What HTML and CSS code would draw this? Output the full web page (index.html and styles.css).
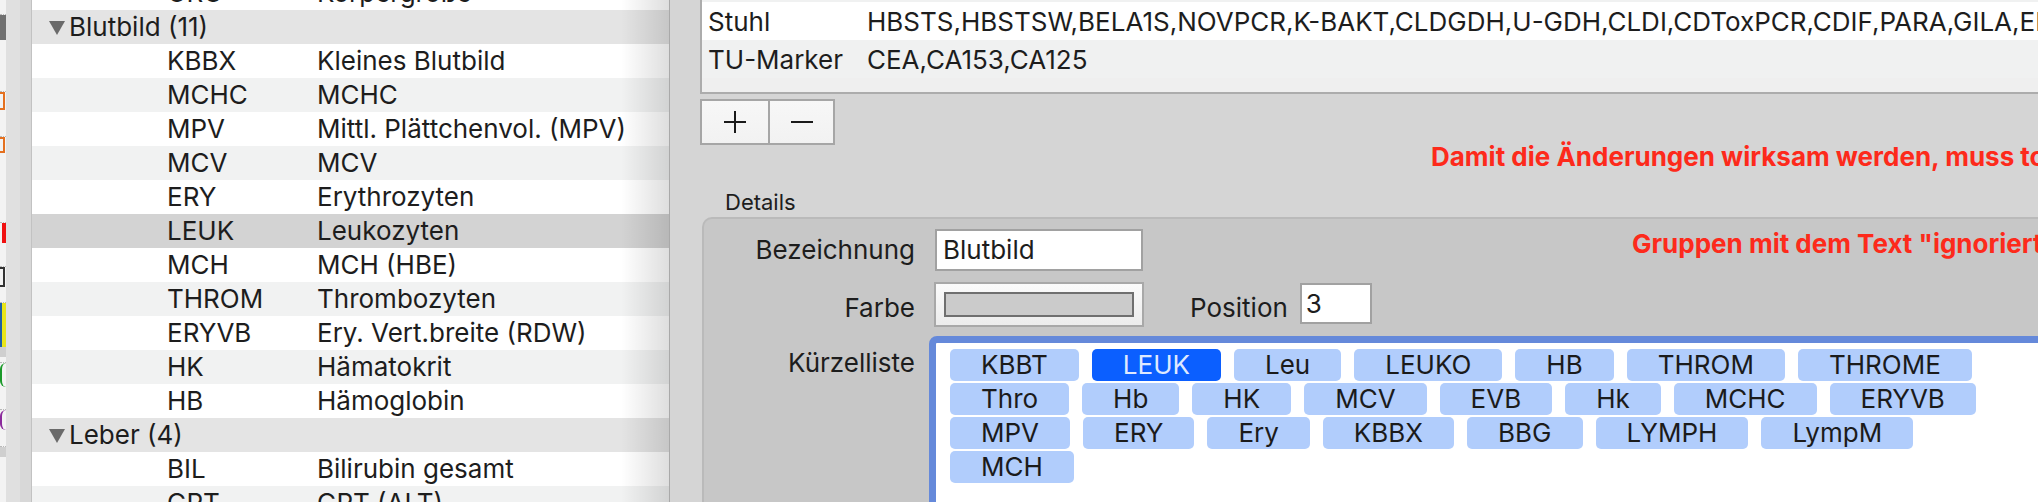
FILE: index.html
```html
<!DOCTYPE html>
<html lang="de">
<head>
  <meta charset="UTF-8" />
  <title>Laborgruppen</title>
  <link rel="stylesheet" href="styles.css">
</head>
<body>
  <div class="screen">
    <div class="edge">
      <div class="e-light" style="height:15px"></div>
      <div class="e-dark" style="height:25px"></div>
      <div class="e-light" style="height:52px"></div>
      <div class="e-mark orange" style="height:18px"></div>
      <div class="e-light" style="height:27px"></div>
      <div class="e-mark orange" style="height:16px"></div>
      <div class="e-light" style="height:70px"></div>
      <div class="e-fill red" style="height:20px"></div>
      <div class="e-light" style="height:24px"></div>
      <div class="e-mark dark" style="height:20px"></div>
      <div class="e-light" style="height:16px"></div>
      <div class="e-fill yellow" style="height:44px"></div>
      <div class="e-gray" style="height:10px"></div>
      <div class="e-light" style="height:6px"></div>
      <div class="e-arc green" style="height:24px"></div>
      <div class="e-light" style="height:23px"></div>
      <div class="e-arc purple" style="height:20px"></div>
      <div class="e-light" style="height:17px"></div>
      <div class="e-gray" style="height:10px"></div>
    </div>
    <div class="frame-a"></div>
    <div class="frame-b"></div>

    <div class="outline">
      <div class="outline-rows">
        <div class="row"><span class="code">GRÖ</span><span>Körpergröße</span></div>
        <div class="row group"><span class="disclosure"></span>Blutbild (11)</div>
        <div class="row"><span class="code">KBBX</span><span>Kleines Blutbild</span></div>
        <div class="row alt"><span class="code">MCHC</span><span>MCHC</span></div>
        <div class="row"><span class="code">MPV</span><span>Mittl. Plättchenvol. (MPV)</span></div>
        <div class="row alt"><span class="code">MCV</span><span>MCV</span></div>
        <div class="row"><span class="code">ERY</span><span>Erythrozyten</span></div>
        <div class="row selected"><span class="code">LEUK</span><span>Leukozyten</span></div>
        <div class="row"><span class="code">MCH</span><span>MCH (HBE)</span></div>
        <div class="row alt"><span class="code">THROM</span><span>Thrombozyten</span></div>
        <div class="row"><span class="code">ERYVB</span><span>Ery. Vert.breite (RDW)</span></div>
        <div class="row alt"><span class="code">HK</span><span>Hämatokrit</span></div>
        <div class="row"><span class="code">HB</span><span>Hämoglobin</span></div>
        <div class="row group"><span class="disclosure"></span>Leber (4)</div>
        <div class="row"><span class="code">BIL</span><span>Bilirubin gesamt</span></div>
        <div class="row alt"><span class="code">GPT</span><span>GPT (ALT)</span></div>
      </div>
    </div>

    <div class="main">
      <div class="groups-table">
        <div class="grow alt"></div>
        <div class="grow"><span class="gname">Stuhl</span><span>HBSTS,HBSTSW,BELA1S,NOVPCR,K-BAKT,CLDGDH,U-GDH,CLDI,CDToxPCR,CDIF,PARA,GILA,ENHEC,NORO</span></div>
        <div class="grow alt"><span class="gname">TU-Marker</span><span>CEA,CA153,CA125</span></div>
        <div class="gfill"></div>
      </div>

      <div class="seg">
        <button class="seg-btn" aria-label="Hinzufügen">
          <svg width="22" height="22" viewBox="0 0 22 22"><path d="M11 0v22M0 11h22" stroke="#1a1a1a" stroke-width="2" fill="none"/></svg>
        </button>
        <button class="seg-btn" aria-label="Entfernen">
          <svg width="22" height="22" viewBox="0 0 22 22"><path d="M0 11h22" stroke="#1a1a1a" stroke-width="2" fill="none"/></svg>
        </button>
      </div>

      <p class="notice restart">Damit die Änderungen wirksam werden, muss tomedo neu gestartet werden.</p>

      <div class="details-title">Details</div>
      <div class="details">
        <div class="form-row first">
          <label class="label">Bezeichnung</label>
          <div class="text-input name-input">Blutbild</div>
          <p class="notice ignore">Gruppen mit dem Text "ignoriert" werden nicht angezeigt.</p>
        </div>
        <div class="form-row second">
          <label class="label">Farbe</label>
          <div class="color-well"><div class="swatch"></div></div>
          <label class="label-inline">Position</label>
          <div class="text-input pos-input">3</div>
        </div>
        <div class="form-row third">
          <label class="label">Kürzelliste</label>
          <div class="token-field">
            <span class="token">KBBT</span>
            <span class="token active">LEUK</span>
            <span class="token">Leu</span>
            <span class="token">LEUKO</span>
            <span class="token">HB</span>
            <span class="token">THROM</span>
            <span class="token">THROME</span>
            <span class="token">Thro</span>
            <span class="token">Hb</span>
            <span class="token">HK</span>
            <span class="token">MCV</span>
            <span class="token">EVB</span>
            <span class="token">Hk</span>
            <span class="token">MCHC</span>
            <span class="token">ERYVB</span>
            <span class="token">MPV</span>
            <span class="token">ERY</span>
            <span class="token">Ery</span>
            <span class="token">KBBX</span>
            <span class="token">BBG</span>
            <span class="token">LYMPH</span>
            <span class="token">LympM</span>
            <span class="token">MCH</span>
          </div>
        </div>
      </div>
    </div>
  </div>
</body>
</html>
```

FILE: styles.css
```css
:root {
  --panel: #d5d5d5;
  --box: #c7c7c7;
  --ink: #1d1d1d;
  --stripe: #f1f2f2;
  --red: #fd2a1b;
}
body {
  margin: 0;
  width: 2038px;
  height: 502px;
  overflow: hidden;
  background: var(--panel);
  font-family: "Inter", "Noto Sans", sans-serif;
  font-size: 26px;
  color: var(--ink);
}
.screen {
  display: flex;
  height: 502px;
}

/* sliver of the window behind */
.edge {
  width: 6px;
  flex: none;
  overflow: hidden;
  background: #f3f3f3;
}
.e-light { background: #f3f3f3; border-bottom: 1px dotted #b9b9b9; box-sizing: border-box; }
.e-dark { background: #707070; }
.e-gray { background: #cfcfcf; }
.e-mark { box-sizing: border-box; border: 2px solid; border-left: none; margin-right: 1px; }
.e-fill.red { background: linear-gradient(to right, #f2f2f2 30%, #f01010 30%); }
.e-fill.yellow { background: linear-gradient(to right, #1d5fa8 2px, #e9e61a 2px); }
.e-arc { box-sizing: border-box; border-left: 2px solid; border-radius: 6px 0 0 6px; }
.orange { border-color: #e4701f; }
.dark { border-color: #333; }
.green { border-color: #1b9a2a; }
.purple { border-color: #8b2a9c; }

.frame-a {
  width: 14px;
  flex: none;
  background: #e0e0e0;
}
.frame-b {
  width: 11px;
  flex: none;
  background: #d8d8d8;
  border-right: 1px solid #c2c2c2;
}

/* outline list on the left */
.outline {
  width: 637px;
  flex: none;
  background: #fff;
  border-right: 1px solid #a9a9a9;
  position: relative;
  overflow: hidden;
}
.outline::after {
  content: "";
  position: absolute;
  top: 0;
  right: 0;
  bottom: 0;
  width: 48px;
  background: linear-gradient(to right, rgba(0,0,0,0), rgba(0,0,0,0.13));
}
.outline-rows {
  margin-top: -24px;
}
.row {
  height: 34px;
  line-height: 34px;
  display: flex;
  align-items: center;
  white-space: nowrap;
  background: #fff;
}
.row.alt { background: var(--stripe); }
.row.selected { background: #d3d3d3; }
.row.group {
  background: #e4e4e4;
  padding-left: 17px;
}
.code {
  margin-left: 135px;
  width: 150px;
  flex: none;
}
.disclosure {
  width: 0;
  height: 0;
  border-left: 8px solid transparent;
  border-right: 8px solid transparent;
  border-top: 14px solid #6a6a6a;
  margin-right: 4px;
  margin-top: 1px;
}

/* right side */
.main {
  flex: 1;
  min-width: 0;
  padding-left: 30px;
  overflow: hidden;
}
.groups-table {
  width: 1500px;
  margin-top: -36px;
  background: #efefef;
  border-left: 2px solid #acacac;
  border-bottom: 2px solid #acacac;
}
.grow {
  height: 38px;
  display: flex;
  align-items: center;
  white-space: nowrap;
  background: #fff;
}
.grow.alt { background: #f0f1f1; }
.gname {
  margin-left: 6px;
  width: 159px;
  flex: none;
}
.gfill { height: 14px; }

.seg {
  display: flex;
  width: max-content;
  margin-top: 5px;
  border: 2px solid #a6a6a6;
}
.seg-btn {
  width: 66px;
  height: 42px;
  margin: 0;
  padding: 0;
  border: none;
  background: linear-gradient(#f7f7f7, #f2f2f2);
  display: flex;
  align-items: center;
  justify-content: center;
}
.seg-btn + .seg-btn {
  width: 65px;
  border-left: 2px solid #a6a6a6;
}

.notice {
  margin: 0;
  color: var(--red);
  font-weight: 700;
  white-space: nowrap;
}
.restart {
  padding-left: 731px;
  line-height: 22px;
  margin-top: 1px;
}

.details-title {
  font-size: 22px;
  line-height: 22px;
  margin-top: 23px;
  padding-left: 25px;
}
.details {
  width: 1500px;
  height: 300px;
  margin-top: 4px;
  margin-left: 2px;
  background: var(--box);
  border-top: 2px solid #bababa;
  border-left: 2px solid #bababa;
  border-radius: 10px 0 0 0;
  padding-top: 10px;
}
.form-row {
  display: flex;
  align-items: flex-start;
}
.form-row > * {
  flex: none;
}
.form-row.second { margin-top: 11px; }
.form-row.third { margin-top: 6px; }
.label {
  width: 211px;
  margin-right: 20px;
  text-align: right;
  line-height: 42px;
}
.second .label,
.label-inline {
  line-height: 45px;
  padding-top: 3px;
}
.third .label {
  line-height: 34px;
  margin-top: 10px;
}
.text-input {
  box-sizing: border-box;
  background: #fff;
  border: 2px solid #a1a1a1;
  padding-left: 6px;
  line-height: 38px;
}
.name-input {
  width: 208px;
  height: 42px;
}
.ignore {
  margin-left: 489px;
  line-height: 29px;
}
.color-well {
  box-sizing: border-box;
  width: 210px;
  height: 45px;
  margin-left: -1px;
  border: 2px solid #a8a8a8;
  background: linear-gradient(#fbfbfb, #ececec);
  padding: 8px;
}
.swatch {
  box-sizing: border-box;
  height: 25px;
  border: 2px solid #6f6f6f;
  background: #cbcbcb;
}
.label-inline {
  margin-left: 46px;
  margin-right: 12px;
}
.pos-input {
  width: 72px;
  height: 41px;
  margin-top: 1px;
  padding-left: 4px;
  line-height: 37px;
}
.token-field {
  box-sizing: border-box;
  width: 1160px;
  height: 200px;
  margin-left: -6px;
  border: 7px solid #6589da;
  border-radius: 8px 0 0 0;
  background: #fff;
  padding: 6px 60px 6px 14px;
  display: flex;
  flex-wrap: wrap;
  align-content: flex-start;
  gap: 2px 13px;
}
.token {
  height: 32px;
  line-height: 32px;
  padding: 0 31px;
  border-radius: 5px;
  background: #b1cdfc;
  color: #1b1b1b;
}
.token.active {
  background: #0b5fff;
  color: #dfe9ff;
}
```
